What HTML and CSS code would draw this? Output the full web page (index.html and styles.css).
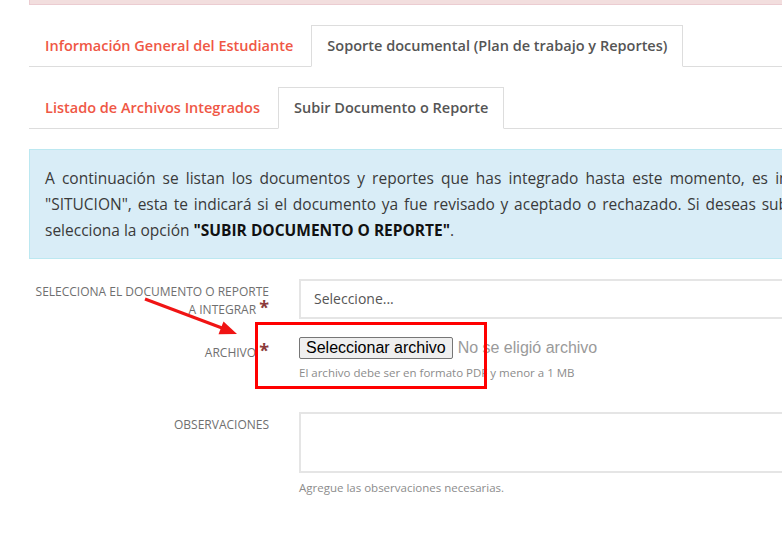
FILE: index.html
```html
<!DOCTYPE html>
<html lang="es">
<head>
<meta charset="utf-8">
<title>Soporte documental</title>
<link rel="stylesheet" href="styles.css">
</head>
<body>
<div class="page">
  <div class="alert-danger"></div>

  <ul class="tabs">
    <li class="tab"><a>Información General del Estudiante</a></li>
    <li class="tab active"><a>Soporte documental (Plan de trabajo y Reportes)</a></li>
  </ul>

  <ul class="tabs">
    <li class="tab"><a>Listado de Archivos Integrados</a></li>
    <li class="tab active"><a>Subir Documento o Reporte</a></li>
  </ul>

  <div class="alert-info">
    <p>A continuación se listan los documentos y reportes que has integrado hasta este momento, es importante que revises la columna "SITUCION", esta te indicará si el documento ya fue revisado y aceptado o rechazado. Si deseas subir un nuevo documento o reporte selecciona la opción <b>"SUBIR DOCUMENTO O REPORTE"</b>.</p>
  </div>

  <form class="form">
    <div class="form-group">
      <label class="form-label">SELECCIONA EL DOCUMENTO O REPORTE A INTEGRAR <span class="req">*</span></label>
      <div class="form-field">
        <div class="select">Seleccione...</div>
      </div>
    </div>

    <div class="form-group">
      <label class="form-label form-label-file">ARCHIVO <span class="req">*</span></label>
      <div class="form-field">
        <div class="file-input">
          <button type="button" class="file-btn">Seleccionar archivo</button>
          <span class="file-name">No se eligió archivo</span>
        </div>
        <span class="help">El archivo debe ser en formato PDF y menor a 1 MB</span>
      </div>
    </div>

    <div class="form-group">
      <label class="form-label">OBSERVACIONES</label>
      <div class="form-field">
        <div class="textarea"></div>
        <span class="help">Agregue las observaciones necesarias.</span>
      </div>
    </div>
  </form>
</div>

<div class="annot-box"></div>
<svg class="annot-arrow" width="782" height="555" viewBox="0 0 782 555">
  <line x1="145" y1="299" x2="222" y2="328" stroke="#f01414" stroke-width="3"/>
  <polygon points="237,334 218.5,334.2 223.5,321.5" fill="#f01414"/>
</svg>
</body>
</html>
```

FILE: styles.css
```css
html, body {
  margin: 0;
  padding: 0;
}

body {
  position: relative;
  width: 782px;
  height: 555px;
  overflow: hidden;
  background: #fff;
  font-family: "Open Sans", "Liberation Sans", sans-serif;
  color: #333;
}

.page {
  margin-left: 29px;
  width: 1025px;
}

.alert-danger {
  height: 4px;
  background: #f2dede;
  border: 1px solid #ebccd1;
  border-top: 0;
  margin-bottom: 20px;
}

.tabs {
  display: flex;
  list-style: none;
  margin: 0 0 20px;
  padding: 0;
  border-bottom: 1px solid #ddd;
}

.tab {
  margin-bottom: -1px;
  margin-right: 2px;
}

.tab a {
  display: block;
  padding: 10px 15px;
  line-height: 20px;
  font-size: 14.5px;
  font-weight: 600;
  color: #ef5745;
  border: 1px solid transparent;
}

.tab.active a {
  color: #555;
  background: #fff;
  border-color: #ddd;
  border-bottom-color: #fff;
}

.alert-info {
  background: #d9edf7;
  border: 1px solid #bce8f1;
  padding: 15px;
  margin-bottom: 20px;
}

.alert-info p {
  margin: 0;
  font-size: 15.5px;
  line-height: 26px;
  text-align: justify;
  color: #3a3a3a;
}

.alert-info b {
  color: #111;
}

.form-group {
  display: flex;
  gap: 30px;
  margin-bottom: 15px;
}

.form-label {
  flex: 0 0 240px;
  box-sizing: border-box;
  text-align: right;
  padding-top: 4px;
  font-size: 12px;
  line-height: 18px;
  color: #6f6f6f;
}

.form-label-file {
  padding-top: 10px;
}

.req {
  color: #8b3a3a;
  font-weight: 700;
  font-size: 18px;
  line-height: 0;
  vertical-align: 0;
}

.form-field {
  flex: 1;
  min-width: 0;
}

.select {
  box-sizing: border-box;
  height: 40px;
  border: 2px solid #e5e5e5;
  padding: 0 13px;
  line-height: 36px;
  font-size: 14px;
  color: #555;
}

.file-input {
  display: flex;
  align-items: center;
  gap: 5px;
  padding-top: 3px;
  font-family: "Liberation Sans", Arial, sans-serif;
  font-size: 16px;
}

.file-btn {
  box-sizing: border-box;
  height: 22px;
  margin: 0;
  padding: 0 6px;
  font-family: "Liberation Sans", Arial, sans-serif;
  font-size: 16px;
  line-height: 18px;
  color: #000;
  background: #efefef;
  border: 1px solid #767676;
  border-radius: 2px;
}

.file-name {
  color: #9a9a9a;
}

.help {
  display: block;
  margin-top: 6px;
  margin-bottom: 16px;
  font-size: 11.5px;
  line-height: 16px;
  color: #8c8c8c;
}

.textarea {
  box-sizing: border-box;
  height: 61px;
  border: 2px solid #e5e5e5;
}

.textarea + .help {
  margin-top: 7px;
}

.annot-box {
  position: absolute;
  left: 255px;
  top: 322px;
  width: 232px;
  height: 67px;
  box-sizing: border-box;
  border: 3px solid #ff0000;
}

.annot-arrow {
  position: absolute;
  left: 0;
  top: 0;
  pointer-events: none;
}
```
